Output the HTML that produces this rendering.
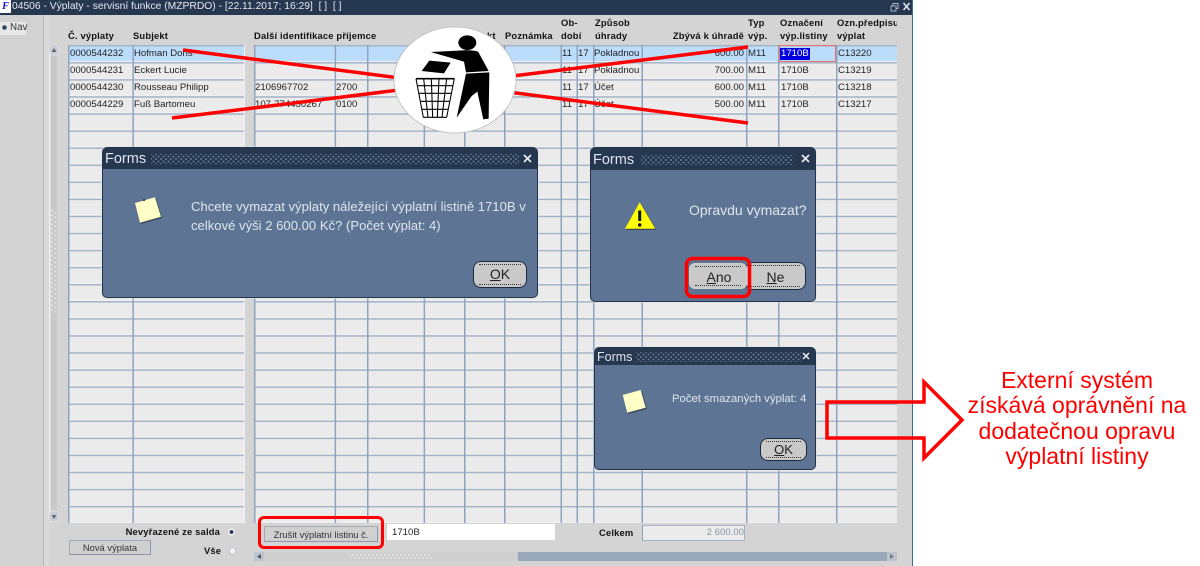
<!DOCTYPE html>
<html><head><meta charset="utf-8"><style>
html,body{margin:0;padding:0;width:1200px;height:566px;overflow:hidden;background:#fff;font-family:"Liberation Sans",sans-serif}
#all{position:absolute;left:0;top:0;width:1200px;height:566px;filter:blur(.35px)}
#w{position:absolute;left:0;top:0;width:912px;height:566px;background:#d4d4d4;border-right:1px solid #3a6ea5;overflow:hidden}
.t{position:absolute;white-space:nowrap;font-size:9.6px;line-height:12px;color:#222;margin-top:1px}
.b{font-weight:bold;color:#111;letter-spacing:.17px;font-size:9.4px}
.r{text-align:right}
.abs{position:absolute;box-sizing:border-box}
.dlg{position:absolute;box-sizing:border-box;background:#5e7494;border-radius:4px;box-shadow:0 0 0 1px #25344b,0 0 0 1.5px #dfe3e9}
.tb{position:absolute;left:0;top:0;right:0;background:#263750;border-radius:4px 4px 0 0}
.ft{position:absolute;color:#dfe6ee;font-size:14.5px;line-height:16px;white-space:nowrap}
.dots{position:absolute;height:10px;background-image:radial-gradient(circle,#66778f .8px,transparent 1.1px),radial-gradient(circle,#66778f .8px,transparent 1.1px);background-size:5px 5px;background-position:0 0,2.5px 2.5px}
.m{position:absolute;color:#dfe6ee;font-size:13.1px;line-height:19px;white-space:nowrap}
.btn{position:absolute;box-sizing:border-box;background:#c9c9c9;border:1px solid #1d2a3e;border-radius:8px;text-align:center;color:#222;font-size:14px}
.btn:before{content:"";position:absolute;left:5px;right:5px;top:2px;bottom:2px;border-top:1px dotted #333;border-bottom:1px dotted #333}
.btn2{position:absolute;box-sizing:border-box;background:#d0d0d0;border:1px solid #a3a9b3;border-right-color:#8a97aa;border-bottom-color:#8a97aa;text-align:center;font-size:9.4px;color:#333}
.red{position:absolute;box-sizing:border-box;border:3.5px solid #f00;border-radius:6px}
</style></head><body>
<div id="all">
<div id="w">
<svg width="912" height="566" style="position:absolute;left:0;top:0">
<defs>
<pattern id="rp" x="0" y="45" width="20" height="17.07" patternUnits="userSpaceOnUse">
<rect width="20" height="17.07" fill="#ebebeb"/>
<rect width="20" height="1.5" fill="#a3b3c8"/>
<rect y="16" width="20" height="1.07" fill="#f2f2f2"/>
</pattern>
</defs>
<rect x="0" y="15" width="44" height="551" fill="#d2d2d2"/>
<rect x="43" y="15" width="1" height="551" fill="#b8b8b8"/>
<rect x="0" y="22" width="26" height="13" fill="#e8e8e8"/>
<rect x="44" y="15" width="868" height="551" fill="#d4d4d4"/>
<rect x="44" y="15" width="5" height="551" fill="#d9d9d9"/>
<rect x="68" y="45" width="177" height="478" fill="url(#rp)"/>
<rect x="254" y="45" width="643" height="478" fill="url(#rp)"/>
<rect x="68" y="46.5" width="177" height="14.5" fill="#bcdcfb"/>
<rect x="254" y="46.5" width="643" height="14.5" fill="#bcdcfb"/>
<g fill="#8fa3bd">
<rect x="68" y="45" width="1.5" height="478"/><rect x="132.4" y="45" width="1.5" height="478"/>
<rect x="254" y="45" width="1.5" height="478"/><rect x="334.6" y="45" width="1.5" height="478"/><rect x="367" y="45" width="1.5" height="478"/><rect x="423.6" y="45" width="1.5" height="478"/><rect x="464" y="45" width="1.5" height="478"/><rect x="504" y="45" width="1.5" height="478"/><rect x="560.5" y="45" width="1.5" height="478"/><rect x="576.5" y="45" width="1.5" height="478"/><rect x="593" y="45" width="1.5" height="478"/><rect x="641.5" y="45" width="1.5" height="478"/><rect x="746" y="45" width="1.5" height="478"/><rect x="778" y="45" width="1.5" height="478"/><rect x="836" y="45" width="1.5" height="478"/>
</g>
<rect x="245" y="45" width="9" height="478" fill="#d4d4d4"/>
<rect x="244" y="45" width="1" height="478" fill="#f4f4f4"/>
<rect x="897" y="15" width="15" height="551" fill="#d4d4d4"/>
<!-- vertical scrollbar -->
<rect x="49" y="47" width="1.5" height="470" fill="#f0f0f0"/>
<rect x="50.5" y="47" width="6.5" height="470" fill="#c8c8c8"/>
<rect x="49" y="44" width="10" height="11" rx="4" fill="#c9ced6" stroke="#e9e9e9" stroke-width=".7"/>
<path d="M51.5 52h5l-2.5-4z" fill="#667"/>
<rect x="49" y="511" width="10" height="11" rx="4" fill="#c9ced6" stroke="#e9e9e9" stroke-width=".7"/>
<path d="M51.5 515h5l-2.5 4z" fill="#667"/>
<path d="M52 210V312M55 212V314" stroke="#efefef" stroke-width="1.4" stroke-dasharray="1.5 3" fill="none"/>
<!-- radios -->
<circle cx="4.5" cy="27.5" r="2.3" fill="#33465f"/>
<circle cx="231.5" cy="532" r="3.5" fill="#eee"/><circle cx="231.5" cy="532" r="1.9" fill="#26374f"/>
<circle cx="232.5" cy="551" r="3.3" fill="#f4f4f4" stroke="#aab" stroke-width=".6"/>
<!-- horizontal scrollbar -->
<rect x="254" y="552" width="643" height="9" fill="#98a8ba"/>
<rect x="264" y="552" width="254" height="9" fill="#cfcfcf"/>
<rect x="254" y="552" width="10" height="9" fill="#bcc4ce"/>
<path d="M261 554v5l-4-2.5z" fill="#556"/>
<rect x="887" y="552" width="10" height="9" fill="#bcc4ce"/>
<path d="M890 554v5l4-2.5z" fill="#778"/>
<path d="M348 555H432M350 558H434" stroke="#eee" stroke-width="1.3" stroke-dasharray="1.5 2.5"/>
</svg>

<!-- title -->
<div class="abs" style="left:0;top:0;width:912px;height:15px;background:#263750"></div>
<div class="abs" style="left:0;top:0;width:11px;height:13px;background:#fff;color:#11c;font:italic bold 10px/13px 'Liberation Serif',serif;text-align:center">F</div>
<div class="t" style="left:12px;top:0;margin-top:0;font-size:10.3px;line-height:14px;color:#e4e9f0">04506 - Výplaty - servisní funkce (MZPRDO) - [22.11.2017; 16:29]&nbsp; [ ]&nbsp; [ ]</div>
<svg width="30" height="14" style="position:absolute;left:888px;top:0"><path d="M3 6h5v5H3zM5 6V3.5h5v5H8" fill="none" stroke="#a9b6c6"/><path d="M15.5 3l6 7M21.5 3l-6 7" stroke="#e4e9f0" stroke-width="1.5"/></svg>
<div class="t" style="left:10px;top:21px;font-size:9.8px;color:#333">Nav</div>

<!-- headers -->
<div class="t b" style="left:68px;top:29px">Č. výplaty</div>
<div class="t b" style="left:133px;top:29px">Subjekt</div>
<div class="t b" style="left:254px;top:29px">Další identifikace příjemce</div>
<div class="t b" style="left:505px;top:29px">Poznámka</div>
<div class="t b" style="left:561px;top:16px">Ob-</div>
<div class="t b" style="left:561px;top:29px">dobí</div>
<div class="t b" style="left:595px;top:16px">Způsob</div>
<div class="t b" style="left:595px;top:29px">úhrady</div>
<div class="t b r" style="left:644px;width:100px;top:29px">Zbývá k úhradě</div>
<div class="t b" style="left:748px;top:16px">Typ</div>
<div class="t b" style="left:748px;top:29px">výp.</div>
<div class="t b" style="left:780px;top:16px">Označení</div>
<div class="t b" style="left:780px;top:29px">výp.listiny</div>
<div class="t b" style="left:837px;top:16px;width:60px;overflow:hidden">Ozn.předpisu</div>
<div class="t b" style="left:837px;top:29px">výplat</div>
<div class="t b" style="left:487px;top:29px">kt</div>

<!-- rows -->
<div class="t" style="left:70px;top:47px">0000544232</div><div class="t" style="left:134px;top:47px">Hofman Doris</div>
<div class="t" style="left:70px;top:64px">0000544231</div><div class="t" style="left:134px;top:64px">Eckert Lucie</div>
<div class="t" style="left:70px;top:81px">0000544230</div><div class="t" style="left:134px;top:81px">Rousseau Philipp</div>
<div class="t" style="left:70px;top:98px">0000544229</div><div class="t" style="left:134px;top:98px">Fuß Bartomeu</div>
<div class="t" style="left:255px;top:81px">2106967702</div><div class="t" style="left:336px;top:81px">2700</div>
<div class="t" style="left:255px;top:98px">107-774450267</div><div class="t" style="left:336px;top:98px">0100</div>

<div class="t" style="left:562px;top:47px">11</div><div class="t" style="left:578px;top:47px">17</div><div class="t" style="left:594px;top:47px">Pokladnou</div>
<div class="t" style="left:562px;top:64px">11</div><div class="t" style="left:578px;top:64px">17</div><div class="t" style="left:594px;top:64px">Pokladnou</div>
<div class="t" style="left:562px;top:81px">11</div><div class="t" style="left:578px;top:81px">17</div><div class="t" style="left:594px;top:81px">Účet</div>
<div class="t" style="left:562px;top:98px">11</div><div class="t" style="left:578px;top:98px">17</div><div class="t" style="left:594px;top:98px">Účet</div>

<div class="t r" style="left:644px;width:100px;top:47px">600.00</div><div class="t" style="left:748px;top:47px">M11</div>
<div class="t r" style="left:644px;width:100px;top:64px">700.00</div><div class="t" style="left:748px;top:64px">M11</div>
<div class="t r" style="left:644px;width:100px;top:81px">600.00</div><div class="t" style="left:748px;top:81px">M11</div>
<div class="t r" style="left:644px;width:100px;top:98px">500.00</div><div class="t" style="left:748px;top:98px">M11</div>

<div class="abs" style="left:779px;top:45px;width:57px;height:17px;border:1.5px solid #ea7070"></div>
<div class="t" style="left:780px;top:47px;background:#0000e0;color:#fff;padding:0 1px 0 1px;line-height:12px">1710B</div>
<div class="t" style="left:781px;top:64px">1710B</div>
<div class="t" style="left:781px;top:81px">1710B</div>
<div class="t" style="left:781px;top:98px">1710B</div>
<div class="t" style="left:838px;top:47px">C13220</div>
<div class="t" style="left:838px;top:64px">C13219</div>
<div class="t" style="left:838px;top:81px">C13218</div>
<div class="t" style="left:838px;top:98px">C13217</div>

<!-- bottom -->
<div class="t b r" style="left:100px;width:120px;top:525px">Nevyřazené ze salda</div>
<div class="t b" style="left:204px;top:544px">Vše</div>
<div class="btn2" style="left:69px;top:540px;width:82px;height:15px;line-height:13px">Nová výplata</div>
<div class="btn2" style="left:264px;top:526px;width:114px;height:16px;line-height:15px">Zrušit výplatní listinu č.</div>
<div class="abs" style="left:387px;top:524px;width:168px;height:16px;background:#fff"></div>
<div class="t" style="left:392px;top:526px">1710B</div>
<div class="t b" style="left:599px;top:526px">Celkem</div>
<div class="abs" style="left:642px;top:525px;width:103px;height:16px;background:#ebebeb;border:1px solid #a3b3c8;border-left:1.5px solid #8fa3bd"></div>
<div class="t r" style="left:642px;width:102px;top:526px;color:#8a95a5">2 600.00</div>
<div class="red" style="left:258px;top:516px;width:126px;height:33px"></div>

<!-- dialog 1 -->
<div class="dlg" style="left:103px;top:148px;width:434px;height:149px">
<div class="tb" style="height:21px"></div>
<div class="ft" style="left:2px;top:3px">Forms</div>
<div class="dots" style="left:48px;top:6px;width:368px"></div>
<svg width="14" height="14" style="position:absolute;left:418px;top:4px"><path d="M3 3l7 7M10 3l-7 7" stroke="#e9edf2" stroke-width="1.7"/></svg>
<div class="m" style="left:88px;top:49px">Chcete vymazat výplaty náležející výplatní listině 1710B v<br>celkové výši 2 600.00 Kč? (Počet výplat: 4)</div>
<div class="btn" style="left:370px;top:113px;width:54px;height:27px;line-height:25px"><u>O</u>K</div>
</div>
<!-- dialog 2 -->
<div class="dlg" style="left:591px;top:148px;width:224px;height:153px">
<div class="tb" style="height:22px"></div>
<div class="ft" style="left:2px;top:4px">Forms</div>
<div class="dots" style="left:50px;top:7px;width:152px"></div>
<svg width="14" height="14" style="position:absolute;left:208px;top:4px"><path d="M3 3l7 7M10 3l-7 7" stroke="#e9edf2" stroke-width="1.7"/></svg>
<div class="m" style="left:98px;top:53px;font-size:14px">Opravdu vymazat?</div>
<div class="btn" style="left:154px;top:114px;width:61px;height:28px;line-height:28px"><u>N</u>e</div>
<div class="btn" style="left:98px;top:115px;width:58px;height:26px;line-height:26px;border-radius:6px;border-color:#d0d0d0;padding-left:2px"><u>A</u>no</div>
</div>
<!-- dialog 3 -->
<div class="dlg" style="left:595px;top:348px;width:220px;height:121px">
<div class="tb" style="height:17px"></div>
<div class="ft" style="left:2px;top:1px;font-size:12.5px">Forms</div>
<div class="dots" style="left:41px;top:4px;width:165px"></div>
<svg width="14" height="14" style="position:absolute;left:205px;top:2px"><path d="M3 3l6 6M9 3l-6 6" stroke="#e9edf2" stroke-width="1.5"/></svg>
<div class="m" style="left:77px;top:42px;font-size:11.3px">Počet smazaných výplat: 4</div>
<div class="btn" style="left:165px;top:90px;width:47px;height:23px;line-height:22px;font-size:13px"><u>O</u>K</div>
</div>
</div>

<svg width="1200" height="566" style="position:absolute;left:0;top:0">
<!-- notes & warning -->
<polygon points="136,204 156,198 162,218 141,224" fill="#3a4658"/>
<polygon points="135,203 155,197.3 161,216.7 140,222.7" fill="#ffffc8"/>
<circle cx="144" cy="200" r="1.2" fill="#444"/>
<polygon points="624,396 642,391 647,409 628,414" fill="#3a4658"/>
<polygon points="622.7,395 640.7,390 645.7,407.7 627.3,412.7" fill="#ffffc8"/>
<polygon points="640.5,203 626,230 656.5,230" fill="#3a4658"/>
<polygon points="639.7,202.3 625,228.7 655.3,228.7" fill="#ff0"/>
<path d="M639.7 210.5V221" stroke="#111" stroke-width="3"/><circle cx="639.7" cy="225" r="1.7" fill="#111"/>
<!-- red lines -->
<path d="M183 50L748 123M172 118L748 47" stroke="#f00" stroke-width="3.5" fill="none"/>
<!-- circle + icon -->
<ellipse cx="455" cy="80" rx="61" ry="53" fill="#fff" stroke="#bbb" stroke-width=".8"/>
<g transform="translate(390 20) scale(.3333)">
<ellipse cx="232" cy="68" rx="27" ry="22" fill="#000"/>
<path d="M122 96L205 92C230 90 255 90 265 96L296 153L228 157L222 125Z" fill="#000"/>
<path d="M228 161L298 157L296 296L280 298L262 215L245 228L200 293Z" fill="#000"/>
<path d="M95 153L118 122L182 128L162 160Z" fill="#000"/>
<path d="M78 176H193" fill="none" stroke="#000" stroke-width="5"/>
<path d="M82 197H189M86 220H185M91 244H180M95 268H175M100 292H170M78 176L100 292M101 176L114 292M124 176L128 292M147 176L142 292M170 176L156 292M193 176L170 292" fill="none" stroke="#000" stroke-width="3.2"/>
</g>
<!-- red arrow -->
<path d="M827 402H924V382L962 420L924 458V438H827Z" fill="none" stroke="#f00" stroke-width="3.5"/>
<!-- Ano highlight -->
<rect x="686.5" y="258.5" width="63" height="38" rx="6" fill="none" stroke="#f00" stroke-width="3.5"/>
</svg>

<div class="abs" style="left:960px;top:368px;width:234px;text-align:center;color:#f00;font-size:23px;line-height:25.4px;white-space:nowrap">Externí systém<br>získává oprávnění na<br>dodatečnou opravu<br>výplatní listiny</div>
</div>
</body></html>
